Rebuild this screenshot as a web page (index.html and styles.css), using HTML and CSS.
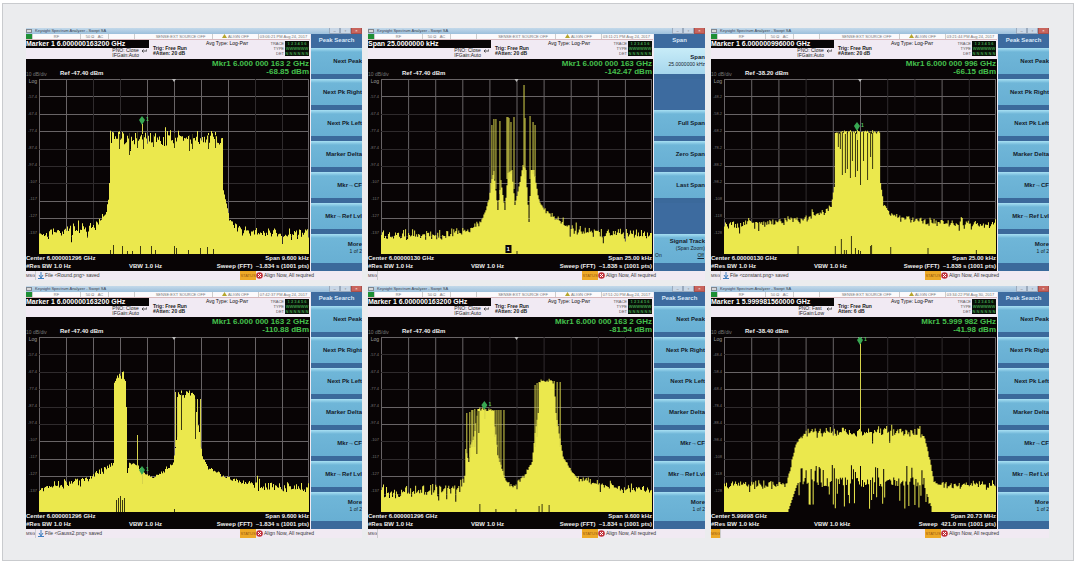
FILE: index.html
```html
<!DOCTYPE html>
<html lang="en">
<head>
    <meta charset="UTF-8">
    <meta name="viewport" content="width=device-width, initial-scale=1.0">
    <title>Spectrum Analyzer Captures</title>
    <link rel="stylesheet" href="styles.css">
</head>
<body>
    <main id="captures" class="captures"></main>
    <script src="analyzer.js"></script>
</body>
</html>
```

FILE: styles.css
```css
* {
    box-sizing: border-box;
}
body {
    margin: 0;
    background-color: #fff;
    font-family: "Liberation Sans", Arial, sans-serif;
    color: #222;
}
.captures {
    display: grid;
    grid-template-columns: 336fr 337fr 338fr;
    gap: 6px;
    margin: 3px 6px 0 2px;
    padding: 24px 24px 22px 23px;
    background-color: #ebecee;
    border: 1px solid #c9cbce;
}
.analyzer {
    min-width: 0;
    background-color: #f1eaf3;
}

/* title bar */
.titlebar {
    display: flex;
    align-items: center;
    gap: 3px;
    height: 6px;
    background: linear-gradient(#c3d9ea, #9dc0dc);
    font-size: 4px;
    line-height: 6px;
    white-space: nowrap;
    color: #3a4250;
}
.titlebar svg {
    width: 6px;
    height: 4px;
}
.win-buttons {
    display: flex;
    margin-left: auto;
}
.win-buttons button {
    width: 11px;
    height: 6px;
    padding: 0;
    border: 1px solid #9aaabd;
    border-top: 0;
    background-color: #c9d7e6;
    font: inherit;
    line-height: 4px;
    color: #555;
}
.win-buttons .close {
    background-color: #c8645c;
    border-color: #a8504c;
    color: #fff;
}
.body {
    display: flex;
}
.screen {
    flex: 1;
    min-width: 0;
}

/* measurement bar */
.inputs {
    display: flex;
    height: 6px;
    padding-right: 2px;
    background-color: #fbfafc;
    border-bottom: 1px solid #d9b9bd;
    font-size: 4px;
    line-height: 5px;
    white-space: nowrap;
    color: #777;
}
.inputs span {
    border-left: 1px solid #ccc;
    text-align: center;
}
.inputs .led {
    width: 6px;
    background-color: #1e8f35;
    border: 0;
}
.inputs .rf {
    width: 48px;
}
.inputs .ac {
    width: 28px;
}
.inputs .blank {
    width: 26px;
}
.inputs .sense {
    flex: 1;
    padding-left: 14px;
}
.inputs .align {
    width: 46px;
}
.inputs .date {
    width: 50px;
}
.settings {
    display: grid;
    grid-template-columns: 123px 44px 1fr 40px;
    height: 19px;
    font-size: 5px;
    line-height: 5px;
    white-space: nowrap;
}
.active {
    height: 8px;
    background-color: #080506;
    color: #fff;
    font-size: 7px;
    font-weight: bold;
    line-height: 8px;
}
.pno {
    display: flex;
    justify-content: flex-end;
    gap: 2px;
    padding-right: 2px;
}
.pno svg {
    width: 6px;
    height: 5px;
}
.trig {
    padding: 6px 0 0 4px;
    font-weight: bold;
}
.avg {
    padding-left: 13px;
    line-height: 7px;
    color: #111;
}
.trace {
    display: flex;
    justify-content: flex-end;
    gap: 1px;
    padding: 1px 1px 0 0;
    font-size: 4px;
    text-align: right;
    color: #555;
}
.trace b {
    display: block;
    width: 24px;
    height: 15px;
    background-color: #081008;
    color: #3f9a48;
    text-align: center;
}

/* display */
.display {
    background-color: #080405;
    color: #eee;
    font-size: 6px;
    font-weight: bold;
    white-space: nowrap;
}
.readout {
    display: grid;
    grid-template-columns: 34px 1fr auto;
    align-items: end;
    height: 20px;
    padding: 0 1px 2px 0;
    line-height: 8px;
}
.readout .scale {
    color: #777;
    font-size: 5px;
    font-weight: normal;
    line-height: 6px;
}
.readout .marker {
    align-self: start;
    padding-top: 1px;
    color: #45c04d;
    font-size: 8px;
    text-align: right;
}
.graph {
    display: grid;
    grid-template-columns: 13px 1fr;
    height: 175px;
    padding-right: 1px;
}
.graph ol {
    margin: 0;
    padding: 0 2px 0 0;
    list-style: none;
    color: #777;
    font-size: 4px;
    font-weight: normal;
    line-height: 6px;
    text-align: right;
}
.graph li {
    height: 17px;
}
.graph li:first-child {
    height: 15px;
    color: #999;
    font-size: 5px;
    line-height: 4px;
}
.plot {
    display: block;
    width: 100%;
    height: 175px;
}
.line {
    stroke: #686466;
    stroke-width: 1;
}
.line.dim {
    stroke: #2f2b2d;
}
.fill {
    fill: #ebe84d;
}
.spike {
    stroke: #d6d34b;
    stroke-width: 1;
}
.gap {
    stroke: #3b390f;
    stroke-width: 1;
}
.diamond {
    fill: #38a853;
}
.marker-no {
    fill: #55c860;
    font-size: 5px;
}
.marker-box {
    fill: #080405;
}
.marker-box-no {
    fill: #fff;
    font-size: 6px;
}
.annotation {
    display: grid;
    grid-template-columns: 103px 1fr auto;
    height: 17px;
    padding: 1px 1px 0 0;
    line-height: 7px;
}
.annotation span:nth-child(2) {
    grid-column: 2 / 4;
    text-align: right;
}

/* softkeys */
.softkeys {
    width: 51px;
    margin-left: 1px;
    background-color: #3d6b9f;
    overflow: hidden;
}
.softkeys h2 {
    height: 14px;
    margin: 0;
    color: #d8e8f8;
    font-size: 6px;
    line-height: 13px;
    text-align: center;
}
.softkeys button,
.softkeys .empty {
    display: block;
    width: 100%;
    height: 31px;
}
.softkeys button {
    padding: 10px 0 0;
    border: 0;
    border-bottom: 5px solid #3b699b;
    background: linear-gradient(#a8e0f3, #6fb6d8 4px, #68afd3);
    color: #14202c;
    font-family: inherit;
    font-size: 6px;
    font-weight: bold;
    line-height: 7px;
    text-align: right;
    white-space: nowrap;
    display: flex;
    flex-direction: column;
    align-items: flex-end;
}
.softkeys button.current {
    padding-top: 6px;
    background: linear-gradient(#c8ecf8, #a6d6ec);
}
.softkeys button.more {
    padding-top: 7px;
    height: 37px;
    border-bottom-width: 8px;
}
.softkeys button.tall {
    padding-top: 4px;
}
.softkeys small {
    font-size: 5px;
    font-weight: normal;
}
.softkeys .toggle {
    display: flex;
    justify-content: space-between;
    width: 100%;
    padding: 0 1px;
}

/* status bar */
.statusbar {
    display: flex;
    height: 9px;
    font-size: 5px;
    line-height: 9px;
    white-space: nowrap;
    color: #333;
}
.statusbar .msg {
    width: 9px;
    font-size: 4px;
}
.statusbar .msg.hot,
.statusbar .status {
    background-color: #eda928;
    color: #9a5a10;
}
.statusbar .file {
    display: flex;
    align-items: center;
    gap: 1px;
    width: 205px;
    padding-left: 2px;
    border-left: 1px solid #ccc;
}
.statusbar .file svg {
    width: 6px;
    height: 7px;
}
.statusbar .status {
    width: 16px;
    font-size: 4px;
    text-align: center;
}
.statusbar .alert {
    display: flex;
    align-items: center;
    gap: 1px;
}
.statusbar .alert svg {
    width: 7px;
    height: 7px;
}
```

FILE: analyzer.js
```js
const peakKeys = ['Next Peak', 'Next Pk Right', 'Next Pk Left', 'Marker Delta', 'Mkr→CF', 'Mkr→Ref Lvl'];
const all = [1, 2, 3, 4, 5, 6, 7, 8, 9];

// env: trace outline [x, y, noise], spikes: [x, top, bottom], gaps: [x, top, bottom], ticks: [x, height]
const captures = [
    {
        active: 'Marker 1 6.000000163200 GHz', marker: 'Mkr1 6.000 000 163 2 GHz', level: '-68.85 dBm',
        ref: -47.4, date: '03:06:21 PM Aug 24, 2017', center: '6.000001296 GHz', span: '9.600 kHz',
        sweep: 'Sweep (FFT)  ~1.834 s (1001 pts)', file: 'Round.png', cols: [1, 4, 5, 6, 7], rows: [1, 2, 3, 7, 8],
        env: [[0, 155, 6], [20, 153, 8], [48, 148, 7], [60, 142, 6], [66, 136, 3], [69, 120, 1], [70, 104, 0], [71, 59, 9],
            [183, 59, 0], [184, 111, 1], [187, 124, 2], [190, 138, 5], [196, 148, 6], [208, 152, 6], [240, 155, 7], [270, 156, 7]],
        gaps: [[80, 55, 70], [90, 54, 76], [98, 53, 69], [104, 56, 70], [114, 56, 68], [135, 54, 69], [150, 56, 72], [153, 55, 70], [169, 56, 70], [176, 56, 69]],
        spikes: [],
        ticks: [[71, 4], [74, 9], [83, 8], [88, 3], [93, 3], [101, 8], [112, 8], [116, 4], [135, 8], [137, 6], [149, 4], [161, 6], [168, 7], [174, 5]],
        at: [103, 41]
    },
    {
        active: 'Span 25.0000000 kHz', marker: 'Mkr1 6.000 000 163 GHz', level: '-142.47 dBm',
        ref: -47.4, date: '03:11:21 PM Aug 24, 2017', center: '6.00000130 GHz', span: '25.00 kHz',
        sweep: 'Sweep (FFT)  ~1.838 s (1001 pts)', cols: all, rows: [1, 6, 7, 8],
        env: [[0, 156, 6], [60, 156, 6], [79, 152, 6], [92, 149, 4], [101, 139, 2], [107, 121, 2], [109, 104, 0], [112, 92, 0],
            [116, 131, 0], [119, 101, 0], [123, 131, 0], [126, 94, 0], [130, 91, 0], [133, 126, 0], [137, 108, 1], [141, 86, 0],
            [144, 91, 0], [147, 143, 0], [149, 91, 0], [152, 91, 0], [154, 104, 1], [157, 121, 1], [162, 131, 2],
            [169, 135, 5], [179, 144, 6], [192, 150, 6], [206, 154, 6], [270, 155, 6]],
        gaps: [], ticks: [[135, 3]],
        spikes: [[110, 46, 110], [112, 40, 100], [114, 40, 110], [118, 42, 115], [125, 38, 100], [126, 38, 100], [127, 39, 100], [129, 43, 95], [132, 38, 110],
            [142, 6, 95], [143, 39, 100], [148, 37, 100], [151, 43, 95], [153, 46, 98]],
        box: [125, 167], span_menu: true
    },
    {
        active: 'Marker 1 6.000000996000 GHz', marker: 'Mkr1 6.000 000 996 GHz', level: '-66.15 dBm',
        ref: -38.2, date: '03:21:44 PM Aug 24, 2017', center: '6.00000130 GHz', span: '25.00 kHz',
        sweep: 'Sweep (FFT)  ~1.838 s (1001 pts)', file: 'constant.png', cols: [1, 2, 4, 5, 8], rows: [1, 2, 3, 5, 6, 7],
        env: [[0, 145, 6], [48, 143, 5], [78, 139, 5], [98, 133, 4], [106, 127, 2], [109, 108, 0], [110, 53, 2], [154, 53, 1],
            [155, 104, 0], [158, 124, 2], [163, 133, 3], [174, 139, 5], [194, 143, 5], [270, 145, 5]],
        gaps: [[113, 53, 68], [115, 54, 70], [117, 53, 96], [120, 55, 94], [122, 54, 90], [125, 53, 99], [127, 53, 82], [130, 54, 98],
            [132, 53, 92], [135, 53, 106], [138, 53, 82], [142, 54, 101], [145, 53, 78], [147, 54, 90]],
        spikes: [],
        ticks: [[73, 8], [110, 8], [116, 15], [119, 4], [121, 4], [126, 18], [130, 6], [133, 4], [135, 3], [145, 8], [146, 9], [165, 7], [202, 6], [250, 4]],
        at: [132, 47]
    },
    {
        active: 'Marker 1 6.000000163200 GHz', marker: 'Mkr1 6.000 000 163 2 GHz', level: '-110.88 dBm',
        ref: -47.4, date: '07:42:37 PM Aug 24, 2017', center: '6.000001296 GHz', span: '9.600 kHz',
        sweep: 'Sweep (FFT)  ~1.834 s (1001 pts)', file: 'Gauss2.png', cols: all, rows: [6, 7, 8],
        env: [[0, 152, 6], [41, 145, 5], [58, 136, 4], [73, 127, 2], [74, 126, 0], [75, 46, 1], [78, 39, 5], [84, 39, 5], [86, 44, 1],
            [87, 70, 0], [88, 136, 0], [90, 126, 1], [98, 128, 2], [104, 136, 2], [113, 140, 3], [124, 136, 3], [134, 126, 1], [137, 103, 0],
            [139, 57, 4], [155, 57, 2], [157, 75, 0], [160, 95, 0], [163, 120, 1], [169, 131, 2], [188, 141, 3], [214, 148, 8], [270, 153, 8]],
        gaps: [[142, 56, 93], [156, 62, 102]],
        spikes: [[98, 98, 130], [136, 55, 110], [138, 60, 100], [158, 62, 90], [161, 62, 110]],
        ticks: [[77, 12], [79, 14], [81, 16], [83, 12], [85, 14], [135, 3]],
        at: [103, 133]
    },
    {
        active: 'Marker 1 6.000000163200 GHz', marker: 'Mkr1 6.000 000 163 2 GHz', level: '-81.54 dBm',
        ref: -47.4, date: '07:51:20 PM Aug 24, 2017', center: '6.000001296 GHz', span: '9.600 kHz',
        sweep: 'Sweep (FFT)  ~1.834 s (1001 pts)', cols: [1, 2, 3], rows: [4, 5, 8],
        env: [[0, 156, 7], [46, 153, 8], [79, 150, 6], [83, 140, 1], [84, 112, 0], [87, 125, 1], [88, 110, 2], [92, 100, 2], [96, 73, 2],
            [112, 73, 1], [113, 88, 3], [116, 118, 1], [122, 138, 1], [126, 148, 4], [132, 148, 4], [142, 140, 3], [150, 125, 1], [153, 96, 0],
            [156, 76, 0], [157, 44, 3], [172, 44, 3], [174, 76, 0], [176, 90, 1], [181, 120, 1], [192, 138, 4], [212, 147, 6], [270, 154, 8]],
        gaps: [[95, 74, 117], [97, 74, 96]],
        spikes: [[85, 76, 120], [88, 75, 120], [90, 73, 110], [91, 73, 110], [93, 72, 110], [113, 73, 100], [115, 73, 110], [117, 73, 125], [119, 73, 130], [122, 73, 140],
            [153, 48, 110], [155, 46, 100], [175, 45, 90], [178, 45, 110]],
        ticks: [[98, 8], [114, 3], [134, 3], [157, 6], [160, 8], [167, 7]],
        at: [103, 68]
    },
    {
        active: 'Marker 1 5.999981560000 GHz', marker: 'Mkr1 5.999 982 GHz', level: '-41.98 dBm', fast: true,
        ref: -38.4, date: '03:34:22 PM Aug 30, 2017', center: '5.99998 GHz', span: '20.73 MHz',
        sweep: 'Sweep  421.0 ms (1001 pts)', cols: [1, 2, 3, 4, 5], rows: [2, 3],
        env: [[0, 149, 6], [61, 147, 5], [66, 130, 3], [70, 110, 2], [76, 99, 3], [82, 95, 6], [194, 95, 5], [199, 102, 2],
            [204, 123, 1], [208, 145, 1], [214, 148, 5], [270, 148, 5]],
        under: [64, 206],
        gaps: [], ticks: [],
        spikes: [[135, 4, 96]],
        at: [135, 3]
    }
];

let seed = 7;
function rand() {
    seed = (seed * 16807) % 2147483647;
    return seed / 2147483647;
}

function tracePath(env) {
    let d = 'M0 175';
    let k = 0;
    for (let x = 0; x < 270; x++) {
        while (x >= env[k + 1][0]) k++;
        const [x0, y0, noise] = env[k];
        const [x1, y1] = env[k + 1];
        const base = y0 + (y1 - y0) * (x - x0) / (x1 - x0);
        const r = rand() + rand() - 1;
        const spread = rand() > 0.88 ? 2 : 1;
        const y = base + Math.max(r * spread, -1.2) * noise;
        d += `V${y.toFixed(1)}h1`;
    }
    return d + 'V175Z';
}

// noisy lower edge of a swept signal
function underPath([from, to]) {
    let d = `M${from} 175`;
    for (let x = from; x < to; x++) {
        const r = rand();
        let y = 140 + rand() * 10;
        if (r > 0.84) y = 128 + rand() * 8;
        if (r < 0.2) y = 156 + rand() * 16;
        const edge = Math.min(x - from, to - x);
        if (edge < 8) y = Math.max(y, 172 - edge * 3);
        d += `V${y.toFixed(1)}h1`;
    }
    return d + 'V175Z';
}

function vline(cls, [x, y1, y2]) {
    return `<path class="${cls}" d="M${x + 0.5} ${y1}V${y2}"/>`;
}

function plot(c) {
    let s = '';
    for (let i = 0; i <= 10; i++) {
        const edge = i === 0 || i === 10;
        s += `<path class="line${edge || c.rows.includes(i) ? '' : ' dim'}" d="M0 ${Math.min(Math.round(i * 17.4) + 0.5, 174.5)}H270"/>`;
        s += `<path class="line${edge || c.cols.includes(i) ? '' : ' dim'}" d="M${Math.min(i * 27 + 0.5, 269.5)} 0V175"/>`;
    }
    s += '<path d="M133 0h4l-2 3z" fill="#bbb"/>';
    s += `<path class="fill" d="${tracePath(c.env)}"/>`;
    if (c.under) s += `<path class="marker-box" d="${underPath(c.under)}"/>`;
    s += c.gaps.map(g => vline('gap', g)).join('');
    s += c.spikes.map(g => vline('spike', g)).join('');
    s += c.ticks.map(t => vline('gap', [t[0], 175 - t[1], 175])).join('');
    if (c.at) {
        const [x, y] = c.at;
        s += `<path class="diamond" d="M${x} ${y - 4}l3 4-3 5-3-5z"/><path class="spike" d="M${x + 0.5} ${y + 4}v10"/>`;
        s += `<text class="marker-no" x="${x + 4}" y="${y + 1}">1</text>`;
    }
    if (c.box) {
        const [x, y] = c.box;
        s += `<rect class="marker-box" x="${x - 1}" y="${y - 1}" width="6" height="8"/><text class="marker-box-no" x="${x}" y="${y + 5}">1</text>`;
    }
    return `<svg class="plot" viewBox="0 0 270 175" preserveAspectRatio="none">${s}</svg>`;
}

function softkeys(c) {
    if (c.span_menu) {
        return `<h2>Span</h2>
            <button type="button" class="current">Span<small>25.0000000 kHz</small></button>
            <div class="empty"></div>
            <button type="button">Full Span</button>
            <button type="button">Zero Span</button>
            <button type="button">Last Span</button>
            <div class="empty"></div>
            <button type="button" class="more tall">Signal Track<small>(Span Zoom)</small><small class="toggle"><span>On</span><u>Off</u></small></button>`;
    }
    return `<h2>Peak Search</h2>
        ${peakKeys.map(k => `<button type="button">${k}</button>`).join('')}
        <button type="button" class="more">More<small>1 of 2</small></button>`;
}

function scaleLabels(ref) {
    return all.map(i => {
        const v = ref - i * 10;
        return `<li>${v > -100 ? v.toFixed(1) : Math.round(v)}</li>`;
    }).join('');
}

function analyzer(c) {
    const unit = c.fast ? 'kHz' : 'Hz';
    return `<section class="analyzer">
        <div class="titlebar">
            <svg viewBox="0 0 6 4"><rect width="6" height="4" fill="#80868e"/><path d="M1 1h4v2h-4z" fill="#d8d8d8"/></svg>
            <span>Keysight Spectrum Analyzer - Swept SA</span>
            <div class="win-buttons">
                <button type="button">–</button><button type="button">▫</button><button type="button" class="close">×</button>
            </div>
        </div>
        <div class="body">
            <div class="screen">
                <div class="inputs">
                    <span class="led"></span><span class="rf">RF</span><span class="ac">50 Ω &nbsp; AC</span><span class="blank"></span>
                    <span class="sense">SENSE:EXT SOURCE OFF</span>
                    <span class="align"><svg width="5" height="4" viewBox="0 0 5 4"><path d="M2.5 0L5 4H0z" fill="#b5a52c"/></svg> ALIGN OFF</span>
                    <span class="date">${c.date}</span>
                </div>
                <div class="settings">
                    <div>
                        <div class="active">${c.active}</div>
                        <div class="pno">
                            <span>PNO: ${c.fast ? 'Fast' : 'Close'}<br>IFGain:${c.fast ? 'Low' : 'Auto'}</span>
                            <svg viewBox="0 0 6 5"><path d="M6 1v2H1M2.5 1.5L1 3l1.500 1.500" fill="none" stroke="#333" stroke-width=".8"/></svg>
                        </div>
                    </div>
                    <div class="trig">Trig: Free Run<br>${c.fast ? 'Atten: 6 dB' : '#Atten: 20 dB'}</div>
                    <div class="avg">Avg Type: Log-Pwr</div>
                    <div class="trace"><span>TRACE<br>TYPE<br>DET</span><b>1 2 3 4 5 6<br>WWWWWW<br>N N N N N N</b></div>
                </div>
                <div class="display">
                    <div class="readout">
                        <span class="scale">10 dB/div</span>
                        <span>Ref ${c.ref.toFixed(2)} dBm</span>
                        <span class="marker">${c.marker}<br>${c.level}</span>
                    </div>
                    <div class="graph">
                        <ol><li>Log</li>${scaleLabels(c.ref)}</ol>
                        ${plot(c)}
                    </div>
                    <div class="annotation">
                        <span>Center ${c.center}</span><span>Span ${c.span}</span>
                        <span>#Res BW 1.0 ${unit}</span><span>VBW 1.0 ${unit}</span><span>${c.sweep.replace('  ', ' &nbsp;')}</span>
                    </div>
                </div>
            </div>
            <nav class="softkeys">${softkeys(c)}</nav>
        </div>
        <div class="statusbar">
            <span class="msg${c.fast ? ' hot' : ''}">MSG</span>
            <span class="file">${c.file ? `<svg viewBox="0 0 6 7"><path d="M3 0v5M1 3l2 3 2-3M0 6.500h6" fill="none" stroke="#3f7fc0"/></svg>File &lt;${c.file}&gt; saved` : ''}</span>
            <span class="status">STATUS</span>
            <span class="alert"><svg viewBox="0 0 7 7"><circle cx="3.500" cy="3.500" r="3.300" fill="#c0303a"/><path d="M2 2l3 3M5 2L2 5" stroke="#fff"/></svg>Align Now, All required</span>
        </div>
    </section>`;
}

document.getElementById('captures').innerHTML = captures.map(analyzer).join('');
```
